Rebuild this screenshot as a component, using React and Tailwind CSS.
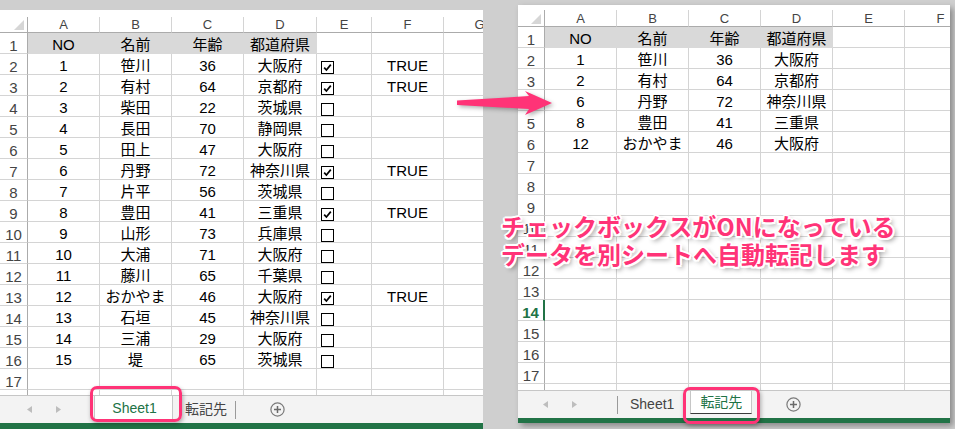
import React from 'react';

// source data on Sheet1
const LEFT = [
  ['1', '笹川', '36', '大阪府', true],
  ['2', '有村', '64', '京都府', true],
  ['3', '柴田', '22', '茨城県', false],
  ['4', '長田', '70', '静岡県', false],
  ['5', '田上', '47', '大阪府', false],
  ['6', '丹野', '72', '神奈川県', true],
  ['7', '片平', '56', '茨城県', false],
  ['8', '豊田', '41', '三重県', true],
  ['9', '山形', '73', '兵庫県', false],
  ['10', '大浦', '71', '大阪府', false],
  ['11', '藤川', '65', '千葉県', false],
  ['12', 'おかやま', '46', '大阪府', true],
  ['13', '石垣', '45', '神奈川県', false],
  ['14', '三浦', '29', '大阪府', false],
  ['15', '堤', '65', '茨城県', false],
];

const hdr = (v) => ({ v, fill: true });

function buildLeft() {
  return Array.from({ length: 18 }, (_, i) => {
    const r = i + 1;
    if (r === 1) return [hdr('NO'), hdr('名前'), hdr('年齢'), hdr('都道府県'), {}, {}, {}];
    const d = LEFT[r - 2];
    if (!d) return [{}, {}, {}, {}, {}, {}, {}];
    return [
      { v: d[0] }, { v: d[1] }, { v: d[2] }, { v: d[3] },
      { check: d[4] ? 'on' : 'off' },
      { v: d[4] ? 'TRUE' : '' },
      {},
    ];
  });
}

function buildRight() {
  const picked = LEFT.filter((d) => d[4]);
  return Array.from({ length: 18 }, (_, i) => {
    const r = i + 1;
    if (r === 1) return [hdr('NO'), hdr('名前'), hdr('年齢'), hdr('都道府県'), {}, {}];
    const d = picked[r - 2];
    if (!d) return [{}, {}, {}, {}, {}, {}];
    return [{ v: d[0] }, { v: d[1] }, { v: d[2] }, { v: d[3] }, {}, {}];
  });
}

function CheckBox({ on }) {
  return (
    <div className="w-[13px] h-[13px] border border-black bg-white flex items-center justify-center">
      {on && (
        <svg width="9" height="9" viewBox="0 0 9 9">
          <path d="M1.2 4.6 L3.4 7 L7.8 1.6" fill="none" stroke="#000" strokeWidth="1.7" />
        </svg>
      )}
    </div>
  );
}

function Sheet({ colsClass, headerH, letters, rows, activeRow }) {
  return (
    <div className={`grid ${colsClass} w-max`}>
      {/* corner */}
      <div className={`${headerH} border-r border-b border-[#ababab] flex items-end justify-end pr-[3px] pb-[2px]`}>
        <svg width="10" height="10" viewBox="0 0 10 10">
          <polygon points="10,0 10,10 0,10" fill="#d6d6d6" />
        </svg>
      </div>
      {letters.map((l) => (
        <div
          key={l}
          className={`${headerH} border-r border-b border-r-[#d4d4d4] border-b-[#ababab] flex items-end justify-center text-[13px] leading-[14px] text-[#444]`}
        >
          {l}
        </div>
      ))}
      {rows.map((cells, i) => {
        const r = i + 1;
        const active = r === activeRow;
        return (
          <React.Fragment key={r}>
            <div
              className={`h-[21px] border-b border-b-[#d4d4d4] flex justify-center items-start pt-[5px] text-[15px] leading-[16px] ${
                active
                  ? 'border-r-2 border-r-[#217346] text-[#217346] font-bold'
                  : 'border-r border-r-[#ababab] text-[#444]'
              }`}
            >
              {/* row 18 is only a sliver under row 17 */}
              {r <= 17 ? r : ''}
            </div>
            {cells.map((c, j) => (
              <div
                key={j}
                className={`h-[21px] border-r border-b flex items-end text-[15px] leading-[16px] text-black whitespace-nowrap ${
                  c.fill ? 'bg-[#d9d9d9] border-[#d9d9d9]' : 'border-[#d4d4d4]'
                } ${c.check ? 'justify-start pl-[4px]' : 'justify-center'}`}
              >
                {c.check ? <CheckBox on={c.check === 'on'} /> : c.v}
              </div>
            ))}
          </React.Fragment>
        );
      })}
    </div>
  );
}

function NavArrows() {
  return (
    <>
      <svg width="5" height="7" viewBox="0 0 5 7">
        <polygon points="5,0 5,7 0,3.5" fill="#bdbdbd" />
      </svg>
      <svg width="5" height="7" viewBox="0 0 5 7" className="ml-[24px]">
        <polygon points="0,0 0,7 5,3.5" fill="#bdbdbd" />
      </svg>
    </>
  );
}

function PlusCircle() {
  return (
    <svg width="15" height="15" viewBox="0 0 15 15">
      <circle cx="7.5" cy="7.5" r="6.6" fill="none" stroke="#7a7a7a" strokeWidth="1.2" />
      <path d="M7.5 4 V11 M4 7.5 H11" stroke="#6a6a6a" strokeWidth="1.5" />
    </svg>
  );
}

function Highlight({ className }) {
  return (
    <div
      className={`absolute z-10 border-[3px] border-[#ff3377] rounded-[7px] shadow-[1px_2px_4px_rgba(0,0,0,0.3)] pointer-events-none ${className}`}
    />
  );
}

export default function App() {
  return (
    <div className="relative w-[955px] h-[429px] overflow-hidden bg-[#cfcfcf] flex items-start font-['Liberation_Sans','Noto_Sans_CJK_JP',sans-serif]">
      {/* Left window: Sheet1 */}
      <div className="mt-[10px] w-[483px] h-[419px] bg-white flex flex-col overflow-hidden">
        <div className="h-[7px] shrink-0" />
        <div className="h-[378px] shrink-0 overflow-hidden">
          <Sheet
            colsClass="grid-cols-[28px_72px_72px_72px_73px_55px_72px_72px]"
            headerH="h-[16px]"
            letters={['A', 'B', 'C', 'D', 'E', 'F', 'G']}
            rows={buildLeft()}
          />
        </div>
        <div className="h-[28px] shrink-0 bg-[#f3f3f3] border-t border-[#c6c6c6] flex items-center">
          <div className="w-[94px] flex items-center pl-[27px]">
            <NavArrows />
          </div>
          <div className="relative self-start w-[79px] h-[25px] bg-white border-x border-b border-[#c6c6c6] rounded-b-[2px] flex items-center justify-center pl-[2px] text-[14px] text-[#217346]">
            Sheet1
            <Highlight className="left-[-5px] right-[-10px] top-[-10px] bottom-[-2px]" />
          </div>
          <div className="ml-[12px] text-[14px] text-[#444]">転記先</div>
          <div className="ml-[8px] w-px h-[18px] bg-[#9a9a9a]" />
          <div className="ml-[34px] flex">
            <PlusCircle />
          </div>
        </div>
        <div className="h-[6px] shrink-0 bg-[#217346]" />
      </div>

      {/* Right window: 転記先 */}
      <div className="ml-[35px] mt-[5px] w-[432px] h-[418px] bg-white flex flex-col shadow-[3px_3px_6px_rgba(0,0,0,0.35)]">
        <div className="h-[5px] shrink-0" />
        <div className="h-[380px] shrink-0 overflow-hidden">
          <Sheet
            colsClass="grid-cols-[27px_72px_72px_72px_72px_72px_72px]"
            headerH="h-[17px]"
            letters={['A', 'B', 'C', 'D', 'E', 'F']}
            rows={buildRight()}
            activeRow={14}
          />
        </div>
        <div className="h-[28px] shrink-0 bg-[#f3f3f3] border-t border-[#c6c6c6] flex items-center">
          <div className="w-[99px] flex items-center pl-[25px]">
            <NavArrows />
          </div>
          <div className="w-px h-[18px] bg-[#9a9a9a]" />
          <div className="ml-[12px] text-[14px] text-[#444]">Sheet1</div>
          <div className="relative self-start ml-[16px] w-[62px] h-[23px] bg-white border-x border-b border-x-[#c6c6c6] border-b-[#3c3c3c] flex items-center justify-center text-[14px] text-[#217346]">
            転記先
            <Highlight className="left-[-8px] right-[-9px] top-[-4px] bottom-[-11px]" />
          </div>
          <div className="ml-[34px] flex">
            <PlusCircle />
          </div>
        </div>
        <div className="h-[5px] shrink-0 bg-[#217346]" />
      </div>

      {/* arrow between windows */}
      <svg
        className="absolute left-[455px] top-[88px] z-20 drop-shadow-[2px_2px_2px_rgba(0,0,0,0.3)]"
        width="100"
        height="30"
        viewBox="0 0 100 30"
      >
        <polygon points="2,12.5 74,8 70,3 97,15 70,27 74,21 2,17" fill="#ff3377" />
      </svg>

      {/* annotation */}
      <div className="absolute left-[501px] top-[212px] z-20 text-[24px] leading-[28px] font-bold text-[#ff3377] whitespace-nowrap font-['Noto_Sans_CJK_JP',sans-serif] [text-shadow:2px_0_#fff,-2px_0_#fff,0_2px_#fff,0_-2px_#fff,1.5px_1.5px_#fff,-1.5px_-1.5px_#fff,1.5px_-1.5px_#fff,-1.5px_1.5px_#fff,3px_3px_5px_rgba(0,0,0,0.45)]">
        <div>チェックボックスがONになっている</div>
        <div>データを別シートへ自動転記します</div>
      </div>
    </div>
  );
}
